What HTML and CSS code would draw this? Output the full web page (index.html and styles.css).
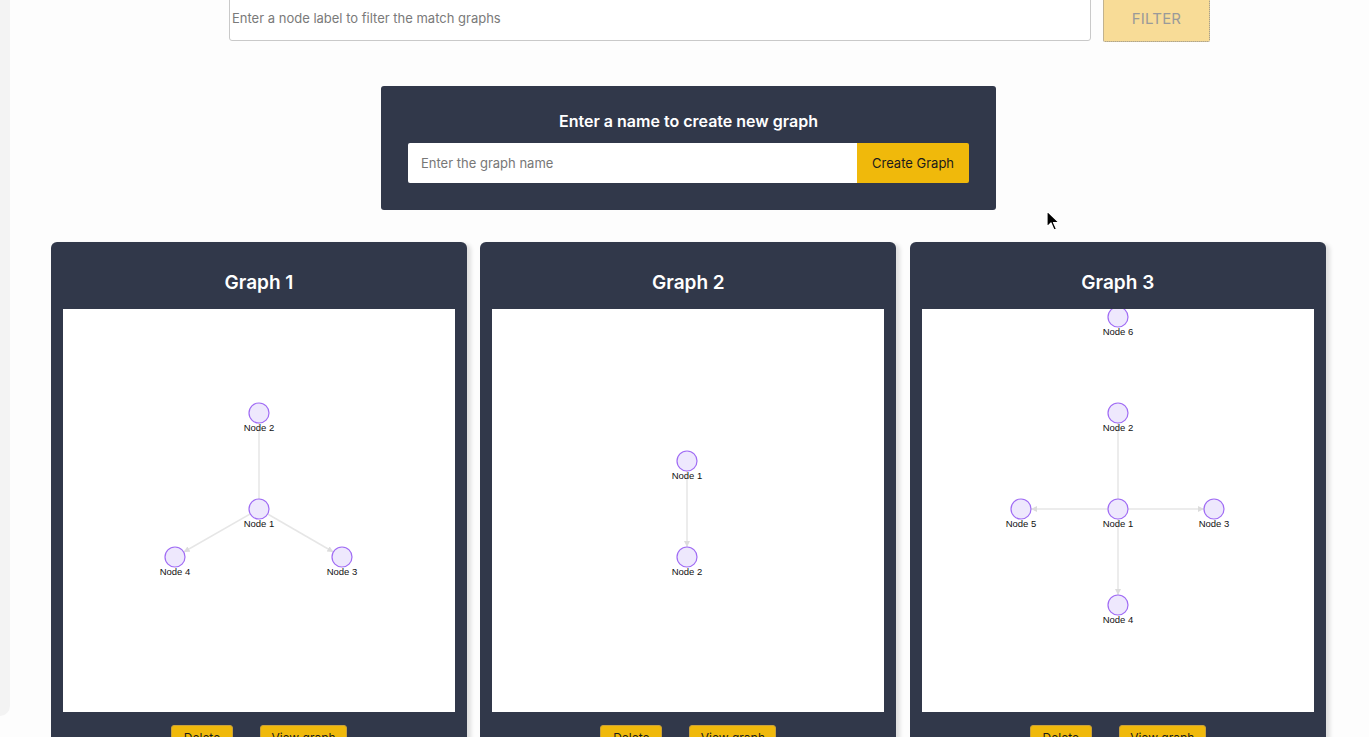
FILE: index.html
```html
<!DOCTYPE html>
<html lang="en">
<head>
<meta charset="utf-8">
<title>Graphs</title>
<link rel="stylesheet" href="styles.css">
</head>
<body>
<div class="page">
  <div class="strip"></div>
  <main class="main">
    <div class="filter-row">
      <input class="filter-input" type="text" placeholder="Enter a node label to filter the match graphs">
      <button class="filter-btn">FILTER</button>
    </div>

    <section class="create-box">
      <h2 class="create-title">Enter a name to create new graph</h2>
      <div class="create-row">
        <input class="create-input" type="text" placeholder="Enter the graph name">
        <button class="create-btn">Create Graph</button>
      </div>
    </section>

    <div class="cards">
      <article class="card">
        <h3 class="card-title">Graph 1</h3>
        <div class="canvas">
          <svg width="392" height="403" viewBox="0 0 392 403">
            <defs>
              <marker id="arr1" markerWidth="20" markerHeight="10" refX="16" refY="3" orient="auto" markerUnits="userSpaceOnUse">
                <path d="M0,0 L6,3 L0,6 Z" fill="#dcdcdc"/>
              </marker>
            </defs>
            <g class="edges">
              <line x1="196" y1="104" x2="196" y2="200"/>
              <line x1="196" y1="200" x2="112" y2="248" marker-end="url(#arr1)"/>
              <line x1="196" y1="200" x2="279" y2="248" marker-end="url(#arr1)"/>
            </g>
            <g class="nodes">
              <circle cx="196" cy="104" r="10"/><text x="196" y="122">Node 2</text>
              <circle cx="196" cy="200" r="10"/><text x="196" y="218">Node 1</text>
              <circle cx="112" cy="248" r="10"/><text x="112" y="266">Node 4</text>
              <circle cx="279" cy="248" r="10"/><text x="279" y="266">Node 3</text>
            </g>
          </svg>
        </div>
        <div class="card-actions">
          <button class="act-btn">Delete</button>
          <button class="act-btn act-view">View graph</button>
        </div>
      </article>

      <article class="card">
        <h3 class="card-title">Graph 2</h3>
        <div class="canvas">
          <svg width="392" height="403" viewBox="0 0 392 403">
            <defs>
              <marker id="arr2" markerWidth="20" markerHeight="10" refX="16" refY="3" orient="auto" markerUnits="userSpaceOnUse">
                <path d="M0,0 L6,3 L0,6 Z" fill="#dcdcdc"/>
              </marker>
            </defs>
            <g class="edges">
              <line x1="195" y1="152" x2="195" y2="248" marker-end="url(#arr2)"/>
            </g>
            <g class="nodes">
              <circle cx="195" cy="152" r="10"/><text x="195" y="170">Node 1</text>
              <circle cx="195" cy="248" r="10"/><text x="195" y="266">Node 2</text>
            </g>
          </svg>
        </div>
        <div class="card-actions">
          <button class="act-btn">Delete</button>
          <button class="act-btn act-view">View graph</button>
        </div>
      </article>

      <article class="card">
        <h3 class="card-title">Graph 3</h3>
        <div class="canvas">
          <svg width="392" height="403" viewBox="0 0 392 403">
            <defs>
              <marker id="arr3" markerWidth="20" markerHeight="10" refX="16" refY="3" orient="auto" markerUnits="userSpaceOnUse">
                <path d="M0,0 L6,3 L0,6 Z" fill="#dcdcdc"/>
              </marker>
            </defs>
            <g class="edges">
              <line x1="196" y1="104" x2="196" y2="200"/>
              <line x1="196" y1="200" x2="99" y2="200" marker-end="url(#arr3)"/>
              <line x1="196" y1="200" x2="292" y2="200" marker-end="url(#arr3)"/>
              <line x1="196" y1="200" x2="196" y2="296" marker-end="url(#arr3)"/>
            </g>
            <g class="nodes">
              <circle cx="196" cy="8" r="10"/><text x="196" y="26">Node 6</text>
              <circle cx="196" cy="104" r="10"/><text x="196" y="122">Node 2</text>
              <circle cx="196" cy="200" r="10"/><text x="196" y="218">Node 1</text>
              <circle cx="99" cy="200" r="10"/><text x="99" y="218">Node 5</text>
              <circle cx="292" cy="200" r="10"/><text x="292" y="218">Node 3</text>
              <circle cx="196" cy="296" r="10"/><text x="196" y="314">Node 4</text>
            </g>
          </svg>
        </div>
        <div class="card-actions">
          <button class="act-btn">Delete</button>
          <button class="act-btn act-view">View graph</button>
        </div>
      </article>
    </div>
  </main>
</div>
<svg class="cursor" width="14" height="22" viewBox="0 0 14 22">
  <path d="M1,1 L1,17 L5,13 L8,20 L10.5,19 L7.5,12.5 L13,12.5 Z" fill="#000" stroke="#fff" stroke-width="1.2" stroke-linejoin="round"/>
</svg>
</body>
</html>
```

FILE: styles.css
```css
* { box-sizing: border-box; }

html, body {
  margin: 0;
  padding: 0;
  background: #fdfdfd;
  font-family: Inter, "Noto Sans", "Liberation Sans", sans-serif;
  overflow: hidden;
}

.page {
  display: flex;
  align-items: flex-start;
  width: 1369px;
  height: 737px;
}

.strip {
  flex: 0 0 10px;
  height: 716px;
  background: #f3f3f3;
  border-bottom-right-radius: 12px;
}

.main {
  flex: 0 0 1276px;
  margin-left: 41px;
}

.filter-row {
  display: flex;
  gap: 12px;
  margin-top: -5px;
  padding-left: 178px;
  padding-right: 117px;
}

.filter-input {
  flex: 1;
  height: 46px;
  border: 1px solid #c9c9c9;
  border-radius: 3px;
  background: #fff;
  padding: 0 2px;
  font-family: Inter, sans-serif;
  font-size: 13px;
  color: #333;
  outline: none;
}
.filter-input::placeholder { color: #7a7a7a; }

.filter-btn {
  flex: 0 0 107px;
  height: 47px;
  background: #f8dc97;
  border: 1px dotted #8a8a8a;
  border-radius: 2px;
  font-family: Inter, sans-serif;
  font-size: 15px;
  color: #9a9a9a;
  letter-spacing: 0.2px;
  padding: 0;
}

.create-box {
  width: 615px;
  margin: 44px 0 0 330px;
  background: #31384a;
  border-radius: 3px;
  padding: 26px 27px 27px;
}

.create-title {
  margin: 0 0 12px;
  text-align: center;
  color: #fff;
  font-size: 16px;
  font-weight: 600;
  line-height: 19px;
}

.create-row {
  display: flex;
  height: 40px;
}

.create-input {
  flex: 1;
  border: none;
  border-radius: 2px 0 0 2px;
  background: #fff;
  padding: 0 13px;
  font-family: Inter, sans-serif;
  font-size: 13px;
  outline: none;
}
.create-input::placeholder { color: #777; }

.create-btn {
  flex: 0 0 112px;
  border: none;
  border-radius: 0 2px 2px 0;
  background: #f0b90b;
  color: #1b1b1b;
  font-family: Inter, sans-serif;
  font-size: 13px;
}

.cards {
  display: grid;
  grid-template-columns: 416px 416px 416px;
  column-gap: 13.4px;
  margin-top: 32px;
}

.card {
  background: #31384a;
  border-radius: 6px;
  padding: 29px 12px 0;
  height: 520px;
  box-shadow: 4px 2px 4px rgba(0, 0, 0, 0.12);
}

.card-title {
  margin: 0 0 14px;
  text-align: center;
  color: #fff;
  font-size: 19px;
  font-weight: 600;
  line-height: 24px;
}

.canvas {
  height: 403px;
  background: #fff;
  overflow: hidden;
}
.canvas svg { display: block; }

.edges line {
  stroke: #e6e6e6;
  stroke-width: 1.5;
}

.nodes circle {
  fill: #eee8fd;
  stroke: #a06cf4;
  stroke-width: 1.2;
}

.nodes text {
  font-family: "Liberation Sans", Arial, sans-serif;
  font-size: 9.5px;
  fill: #111;
  text-anchor: middle;
}

.card-actions {
  display: flex;
  justify-content: center;
  gap: 27px;
  margin-top: 13px;
}

.act-btn {
  width: 62px;
  height: 30px;
  background: #f0b90b;
  border: 1px solid #c9a03a;
  border-radius: 3px;
  font-family: Inter, sans-serif;
  font-size: 12px;
  color: #1b1b1b;
  padding: 0 0 6px;
}
.act-view { width: 87px; }

.cursor {
  position: absolute;
  left: 1046px;
  top: 210px;
}
```
